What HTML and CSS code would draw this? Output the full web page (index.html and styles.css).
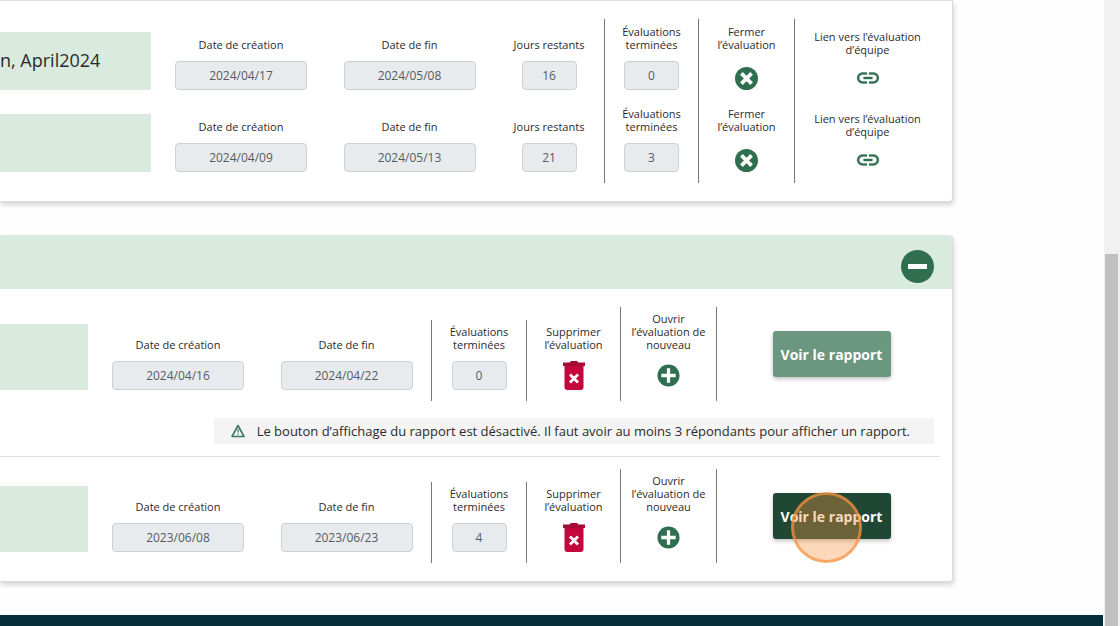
FILE: index.html
```html
<!DOCTYPE html>
<html lang="fr">
<head>
<meta charset="utf-8">
<title>Évaluations</title>
<link rel="stylesheet" href="styles.css">
</head>
<body>
<svg class="sprite" aria-hidden="true">
  <symbol id="close" viewBox="0 0 24 24"><circle cx="12" cy="12" r="12" fill="#2f6e4f"/><path d="M6.700 6.700l10.600 10.600M17.300 6.700l-10.600 10.600" stroke="#fff" stroke-width="3.900"/></symbol>
  <symbol id="plus" viewBox="0 0 24 24"><circle cx="12" cy="12" r="11.5" fill="#2f6e4f"/><path d="M12 4.500v15M4.500 12h15" stroke="#fff" stroke-width="3.400"/></symbol>
  <symbol id="link" viewBox="1 1 22 22"><path fill="#2f6e4f" stroke="#2f6e4f" stroke-width="0.300" d="M3.900 12c0-1.710 1.390-3.100 3.100-3.100h4V7H7c-2.760 0-5 2.240-5 5s2.240 5 5 5h4v-1.900H7c-1.710 0-3.100-1.390-3.100-3.100zM8 13h8v-2H8v2zm9-6h-4v1.900h4c1.710 0 3.100 1.390 3.100 3.100s-1.390 3.100-3.100 3.100h-4V17h4c2.760 0 5-2.240 5-5s-2.240-5-5-5z"/></symbol>
  <symbol id="trash" viewBox="0 0 22 29"><path fill="#c5063b" d="M1.500 5h19V26a3 3 0 0 1-3 3h-13a3 3 0 0 1-3-3z"/><path fill="#a80a36" d="M0 1.500h6.500L8 0h6l1.500 1.500H22V5H0z"/><path d="M7 13.500l8 8M15 13.500l-8 8" stroke="#fff" stroke-width="2.800"/></symbol>
  <symbol id="warn" viewBox="0 0 14 14"><path d="M7 1.500L13 12.500H1z" fill="none" stroke="#3f7a5d" stroke-width="1.600" stroke-linejoin="round"/><path d="M7 5v3.500M7 9.500v1.300" stroke="#3f7a5d" stroke-width="1.200"/></symbol>
</svg>
<div class="page">
  <main class="content">
    <section class="panel panel-open">
      <div class="row row-active">
        <div class="name">n, April2024</div>
        <div class="cell"><label for="a1">Date de création</label><input id="a1" class="date" value="2024/04/17" disabled></div>
        <div class="cell"><label for="a2">Date de fin</label><input id="a2" class="date" value="2024/05/08" disabled></div>
        <div class="cell"><label for="a3">Jours restants</label><input id="a3" class="count" value="16" disabled></div>
        <div class="cell ruled"><label for="a4">Évaluations<br>terminées</label><input id="a4" class="count" value="0" disabled></div>
        <div class="cell ruled"><span id="a5" class="caption">Fermer<br>l’évaluation</span><button class="icon" aria-labelledby="a5"><svg><use href="#close"/></svg></button></div>
        <div class="cell ruled"><span id="a6" class="caption">Lien vers l’évaluation<br>d’équipe</span><button class="icon link" aria-labelledby="a6"><svg><use href="#link"/></svg></button></div>
      </div>
      <div class="row row-active">
        <div class="name"></div>
        <div class="cell"><label for="b1">Date de création</label><input id="b1" class="date" value="2024/04/09" disabled></div>
        <div class="cell"><label for="b2">Date de fin</label><input id="b2" class="date" value="2024/05/13" disabled></div>
        <div class="cell"><label for="b3">Jours restants</label><input id="b3" class="count" value="21" disabled></div>
        <div class="cell ruled"><label for="b4">Évaluations<br>terminées</label><input id="b4" class="count" value="3" disabled></div>
        <div class="cell ruled"><span id="b5" class="caption">Fermer<br>l’évaluation</span><button class="icon" aria-labelledby="b5"><svg><use href="#close"/></svg></button></div>
        <div class="cell ruled"><span id="b6" class="caption">Lien vers l’évaluation<br>d’équipe</span><button class="icon link" aria-labelledby="b6"><svg><use href="#link"/></svg></button></div>
      </div>
    </section>

    <section class="panel panel-closed">
      <header class="panel-head"><button class="collapse" aria-label="Réduire"><span></span></button></header>
      <div class="panel-body">
        <div class="row row-closed">
          <div class="name"></div>
          <div class="cell"><label for="c1">Date de création</label><input id="c1" class="date" value="2024/04/16" disabled></div>
          <div class="cell"><label for="c2">Date de fin</label><input id="c2" class="date" value="2024/04/22" disabled></div>
          <div class="cell ruled"><label for="c3">Évaluations<br>terminées</label><input id="c3" class="count" value="0" disabled></div>
          <div class="cell ruled"><span id="c4" class="caption">Supprimer<br>l’évaluation</span><button class="icon trash" aria-labelledby="c4"><svg><use href="#trash"/></svg></button></div>
          <div class="cell ruled ruled-end"><span id="c5" class="caption">Ouvrir<br>l’évaluation de<br>nouveau</span><button class="icon reopen" aria-labelledby="c5"><svg><use href="#plus"/></svg></button></div>
          <div class="action"><button class="report" disabled>Voir le rapport</button></div>
        </div>
        <p class="notice"><svg><use href="#warn"/></svg>Le bouton d’affichage du rapport est désactivé. Il faut avoir au moins 3 répondants pour afficher un rapport.</p>
        <hr>
        <div class="row row-closed">
          <div class="name"></div>
          <div class="cell"><label for="d1">Date de création</label><input id="d1" class="date" value="2023/06/08" disabled></div>
          <div class="cell"><label for="d2">Date de fin</label><input id="d2" class="date" value="2023/06/23" disabled></div>
          <div class="cell ruled"><label for="d3">Évaluations<br>terminées</label><input id="d3" class="count" value="4" disabled></div>
          <div class="cell ruled"><span id="d4" class="caption">Supprimer<br>l’évaluation</span><button class="icon trash" aria-labelledby="d4"><svg><use href="#trash"/></svg></button></div>
          <div class="cell ruled ruled-end"><span id="d5" class="caption">Ouvrir<br>l’évaluation de<br>nouveau</span><button class="icon reopen" aria-labelledby="d5"><svg><use href="#plus"/></svg></button></div>
          <div class="action"><button class="report">Voir le rapport</button><span class="click-ring"></span></div>
        </div>
      </div>
    </section>
    <footer class="footer"></footer>
  </main>
  <div class="scroll-track"><div class="scroll-thumb"></div></div>
</div>
</body>
</html>
```

FILE: styles.css
```css
* { box-sizing: border-box; }

body {
  margin: 0;
  background: #fefefe;
  color: #2b2b2b;
  font-family: "Open Sans", "Noto Sans", sans-serif;
}

.sprite { position: absolute; width: 0; height: 0; }

.page { display: flex; height: 100vh; overflow: hidden; }

.content { flex: 1; display: flex; flex-direction: column; }

.panel {
  margin-right: 151px;
  background: #fff;
  border-right: 1px solid #d8dcda;
  border-bottom: 1px solid #d8dcda;
  box-shadow: 1px 3px 5px rgba(0, 0, 0, 0.16);
}

.panel-open {
  padding: 18px 12px 18px 0;
  border-top: 1px solid #d3e2dc;
  border-radius: 0 0 4px 0;
}

.panel-closed { margin-top: 33px; border-radius: 0 4px 4px 0; }

.panel-head {
  display: flex;
  align-items: center;
  justify-content: flex-end;
  height: 54px;
  padding: 8px 18px 0 0;
  background: #d9eadf;
  border-radius: 0 4px 0 0;
}

.panel-body { padding: 18px 0; }

.row { display: grid; align-items: end; }
.row-active { grid-template-columns: 1fr 168px 169px 110px 94px 96px 146px; min-height: 82px; }
.row-closed { grid-template-columns: 1fr 168px 169px 95px 94px 97px 229px; padding-right: 6px; }

.name {
  height: 58px;
  margin: 0 6px 11px 0;
  background: #d9eadf;
  font-size: 18px;
  line-height: 56px;
  white-space: nowrap;
}
.row-closed .name { height: 66px; }

.cell {
  display: flex;
  flex-direction: column;
  align-items: center;
  justify-content: flex-end;
  gap: 10px;
  padding: 5px 0 11px;
}
.row-active .cell { align-self: stretch; }
.ruled { border-left: 1px solid #777; }
.ruled-end { border-right: 1px solid #777; }

label, .caption {
  font-size: 11px;
  line-height: 13px;
  text-align: center;
  white-space: nowrap;
}

input {
  height: 29px;
  padding: 0;
  background: #e8ebee;
  border: 1px solid #cdd1d4;
  border-radius: 4px;
  color: #555b61;
  font: 12px "Open Sans", "Noto Sans", sans-serif;
  text-align: center;
}
.date { width: 132px; }
.count { width: 55px; }

button { padding: 0; border: 0; background: none; font-family: inherit; }

.icon { display: flex; margin-top: 6px; }
.icon svg { width: 23px; height: 23px; }
.link { margin-top: 0; }
.link svg { width: 24px; height: 24px; }
.trash { margin-top: 0; }
.trash svg { width: 22px; height: 29px; }
.reopen { margin: 3px 0; }

.collapse {
  display: grid;
  place-items: center;
  width: 33px;
  height: 33px;
  border-radius: 50%;
  background: #2f6e4f;
}
.collapse span { width: 19px; height: 5px; background: #fff; }

.action { position: relative; display: flex; justify-content: center; align-self: center; }

.report {
  width: 118px;
  height: 46px;
  border-radius: 3px;
  background: #1f4733;
  box-shadow: 0 2px 4px rgba(0, 0, 0, 0.25);
  color: #fff;
  font-size: 14px;
  font-weight: 700;
}
.report:disabled { background: #6b967f; }

.click-ring {
  position: absolute;
  top: -1px;
  left: 74px;
  width: 71px;
  height: 71px;
  border: 3px solid rgba(247, 147, 66, 0.7);
  border-radius: 50%;
  background: rgba(247, 147, 66, 0.36);
}

.notice {
  display: flex;
  align-items: center;
  gap: 12px;
  width: fit-content;
  height: 26px;
  margin: 17px 18px 12px auto;
  padding: 0 24px 0 17px;
  background: #f4f4f4;
  font-size: 13px;
  white-space: nowrap;
}
.notice svg { width: 14px; height: 14px; }

hr { margin: 0 12px 12px 0; border: 0; border-top: 1px solid #dfdfdf; }

.footer { flex: 1; margin: 33px 1px 0 0; background: #052d3b; }

.scroll-track { display: grid; grid-template-rows: 254px 1fr; width: 16px; padding: 0 2px 0 1px; background: #f1f1f1; }
.scroll-thumb { grid-row: 2; background: #c0c0c0; }
```
